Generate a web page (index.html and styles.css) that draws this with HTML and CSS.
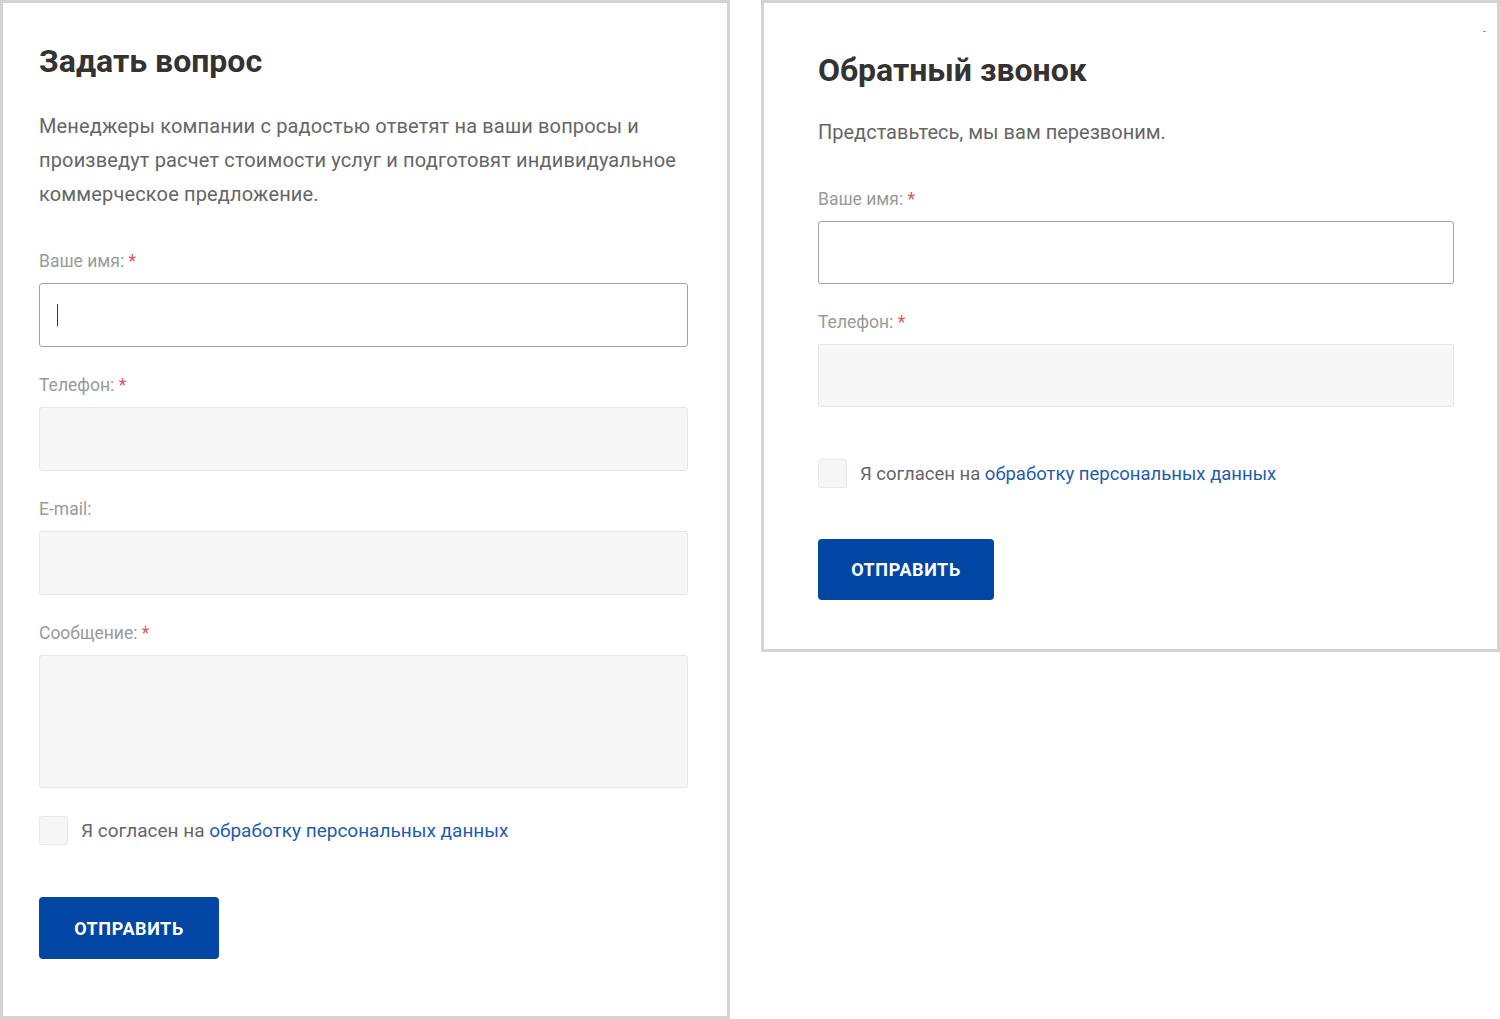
FILE: index.html
```html
<!DOCTYPE html>
<html lang="ru">
<head>
<meta charset="utf-8">
<title>Формы</title>
<link rel="stylesheet" href="styles.css">
</head>
<body>
<div class="page">
  <section class="panel panel-ask">
    <h2 class="title">Задать вопрос</h2>
    <p class="desc">Менеджеры компании с радостью ответят на ваши вопросы и произведут расчет стоимости услуг и подготовят индивидуальное коммерческое предложение.</p>
    <form class="form">
      <div class="field">
        <label class="label">Ваше имя: <span class="req">*</span></label>
        <div class="input-wrap">
          <input class="input input-focus" type="text">
          <span class="caret"></span>
        </div>
      </div>
      <div class="field">
        <label class="label">Телефон: <span class="req">*</span></label>
        <input class="input" type="text">
      </div>
      <div class="field">
        <label class="label">E-mail:</label>
        <input class="input" type="text">
      </div>
      <div class="field">
        <label class="label">Сообщение: <span class="req">*</span></label>
        <textarea class="input textarea"></textarea>
      </div>
      <div class="agree agree-ask">
        <span class="checkbox"></span>
        <span class="agree-text">Я согласен на <a href="#" class="link">обработку персональных данных</a></span>
      </div>
      <button type="button" class="btn btn-ask">Отправить</button>
    </form>
  </section>

  <section class="panel panel-call">
    <span class="close-mark"></span>
    <h2 class="title">Обратный звонок</h2>
    <p class="desc desc-call">Представьтесь, мы вам перезвоним.</p>
    <form class="form">
      <div class="field">
        <label class="label">Ваше имя: <span class="req">*</span></label>
        <input class="input input-focus" type="text">
      </div>
      <div class="field field-last">
        <label class="label">Телефон: <span class="req">*</span></label>
        <input class="input" type="text">
      </div>
      <div class="agree agree-call">
        <span class="checkbox"></span>
        <span class="agree-text agree-text-call">Я согласен на <a href="#" class="link">обработку персональных данных</a></span>
      </div>
      <button type="button" class="btn btn-call">Отправить</button>
    </form>
  </section>
</div>
</body>
</html>
```

FILE: styles.css
```css
* { box-sizing: border-box; }
html, body {
  margin: 0;
  padding: 0;
  background: #ffffff;
  font-family: Roboto, "Liberation Sans", Arial, sans-serif;
}
.page {
  display: flex;
  align-items: flex-start;
  gap: 31px;
  width: 1500px;
  height: 1019px;
}
.panel {
  position: relative;
  border: 3px solid #d3d3d3;
  background: #fff;
}
.panel-ask {
  width: 730px;
  height: 1019px;
  padding: 38px 39px 0 36px;
}
.panel-call {
  width: 739px;
  padding: 47px 43px 49px 54px;
}
.title {
  margin: 0;
  font-size: 32px;
  line-height: 40px;
  font-weight: 700;
  color: #333333;
}
.desc {
  margin: 28px 0 40px;
  font-size: 20px;
  line-height: 34px;
  letter-spacing: 0.15px;
  color: #666666;
}
.desc-call {
  margin: 25px 0 40px;
  letter-spacing: 0;
}
.form { display: flex; flex-direction: column; align-items: flex-start; }
.field {
  width: 100%;
  display: flex;
  flex-direction: column;
  margin-bottom: 28px;
}
.field-last { margin-bottom: 52px; }
.label {
  font-size: 17.5px;
  line-height: 20px;
  color: #9a9a9a;
  margin-bottom: 12px;
}
.req { color: #e2545a; }
.input-wrap { position: relative; }
.input {
  display: block;
  width: 100%;
  height: 64px;
  margin: 0;
  border: 1px solid #e6e6e6;
  border-radius: 3px;
  background: #f7f7f7;
  font: inherit;
  outline: none;
}
.input-focus {
  background: #ffffff;
  border-color: #a3a3a3;
}
.panel-call .input { height: 63px; }
.caret {
  position: absolute;
  left: 18px;
  top: 21px;
  width: 1px;
  height: 22px;
  background: #333;
}
.textarea {
  height: 133px;
  resize: none;
}
.agree {
  display: flex;
  align-items: center;
  gap: 13px;
}
.agree-ask { margin-bottom: 52px; }
.agree-call { margin-bottom: 51px; }
.checkbox {
  display: block;
  width: 29px;
  height: 29px;
  border: 1px solid #e8e8e8;
  border-radius: 3px;
  background: #f6f6f6;
}
.agree-text {
  font-size: 19px;
  line-height: 24px;
  color: #666666;
}
.agree-text-call { font-size: 18.5px; }
.link {
  color: #1f5cab;
  text-decoration: none;
}
.btn {
  display: block;
  height: 62px;
  padding: 0;
  border: none;
  border-radius: 4px;
  background: #0046a2;
  color: #ffffff;
  font-family: Roboto, "Liberation Sans", Arial, sans-serif;
  font-size: 18px;
  font-weight: 700;
  letter-spacing: 0.6px;
  text-transform: uppercase;
  text-align: center;
}
.btn-ask { width: 180px; }
.btn-call { width: 176px; height: 61px; }
.close-mark {
  position: absolute;
  top: 28px;
  right: 11px;
  width: 3px;
  height: 1px;
  background: #9a9a9a;
}
```
